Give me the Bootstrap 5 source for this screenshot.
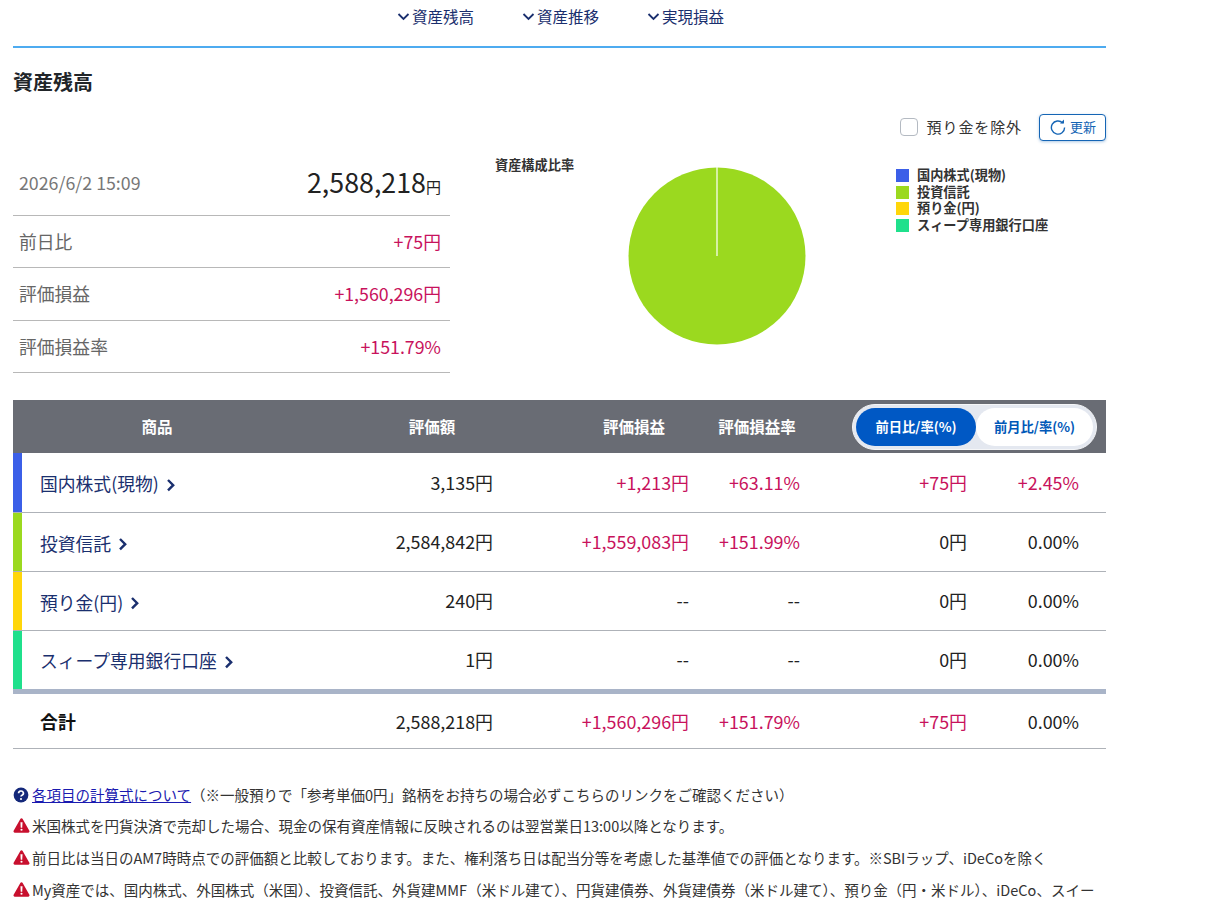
<!DOCTYPE html>
<html lang="ja">
<head>
  <meta charset="UTF-8">
  <meta name="viewport" content="width=device-width, initial-scale=1">
  <title>資産残高</title>
  <link rel="stylesheet" href="https://cdn.jsdelivr.net/npm/bootstrap@5.3.3/dist/css/bootstrap.min.css">
  <style>
    body { font-family: "Noto Sans CJK JP", "Noto Sans", sans-serif; color: #212529; background: #fff; }
    .page-wrap { width: 1093px; margin-left: 13px; }
    .tab-row { height: 48px; border-bottom: 2px solid #4dabf0; padding-left: 384px; gap: 47px; }
    .tab-link { color: #1a2f6e; font-size: 15.5px; text-decoration: none; line-height: 20px; height: 20px; margin-top: 6px; gap: 2px; width: 78px; white-space: nowrap; }
    .page-title { font-size: 20px; font-weight: 700; line-height: 30px; margin: 19px 0 0; }
    .option-row { height: 28px; margin-top: 16px; }
    .fake-check { width: 18px; height: 18px; border: 1px solid #b4bac2; border-radius: 4px; margin-right: 9px; }
    .option-label { font-size: 15px; letter-spacing: .9px; color: #333; margin-right: 17px; }
    .reload-btn { width: 67px; height: 27px; border: 1px solid #1565b5; border-radius: 4px; color: #1565b5; font-size: 13px; gap: 4px; background: #fff; box-shadow: 0 1px 3px rgba(21,101,181,.35); padding: 0 0 0 1px; }
    .sum-table { width: 437px; margin-top: 15px; }
    .sum-line { height: 52.4px; border-bottom: 1px solid #b8b8b8; padding: 0 9px 1px 6px; font-size: 17.8px; color: #666; }
    .sum-line.first-line { height: 60px; padding-bottom: 7px; }
    .when { font-size: 17.8px; color: #777; }
    .big-total { font-size: 26.8px; color: #222; line-height: 1; }
    .big-total small { font-size: 15px; }
    .plus { color: #c8125c; }
    .pie-wrap { margin-left: 46px; }
    .pie-title { font-size: 13.2px; font-weight: 700; color: #333; margin-top: 14px; margin-left: -1px; width: 133px; flex-shrink: 0; }
    .pie-svg { margin-top: 26px; }
    .legend-box { margin-left: 90px; margin-top: 26px; font-size: 13.2px; font-weight: 700; color: #333; line-height: 16.7px; white-space: nowrap; }
    .legend-swatch { width: 13px; height: 13px; margin-right: 8px; }
    .asset-table { width: 1093px; table-layout: fixed; border-collapse: collapse; margin-top: 27px; }
    .asset-table th { background: #696c74; color: #fff; height: 53px; font-size: 15.5px; font-weight: 700; text-align: center; padding: 0; }
    .asset-table td { height: 59px; border-bottom: 1px solid #aeb2b8; font-size: 17.9px; text-align: right; color: #222; padding: 0; }
    .asset-table .c-name { text-align: left; padding-left: 27px; padding-top: 3px; }
    .asset-table .bar-blue { box-shadow: inset 9px 0 0 #3b5fe8; }
    .asset-table .bar-green { box-shadow: inset 9px 0 0 #9bd91f; }
    .asset-table .bar-yellow { box-shadow: inset 9px 0 0 #ffd60a; }
    .asset-table .bar-mint { box-shadow: inset 9px 0 0 #1fe08c; }
    .p-70 { padding-right: 70px !important; }
    .p-16 { padding-right: 16px !important; }
    .p-9 { padding-right: 9px !important; }
    .p-27 { padding-right: 27px !important; }
    .asset-table td.plus { color: #c8125c; }
    .asset-link { color: #1a2f6e; text-decoration: none; font-size: 17.8px; gap: 7px; }
    .asset-table .last-asset td { border-bottom: 5px solid #a9b4c8; height: 61px; padding-bottom: 1px; }
    .asset-table .total-row td { height: 57px; padding-top: 1px; }
    .asset-table .total-row .c-name { font-weight: 700; color: #111; padding-top: 1px; }
    .toggle-pill { width: 245px; height: 46px; background: #e4e8f0; border-radius: 23px; padding: 3px; border: 1px solid #f5f6f8; }
    .toggle-on, .toggle-off { width: 120px; height: 38px; border-radius: 19px; font-size: 13.3px; }
    .toggle-on { background: #0058c4; color: #fff; }
    .toggle-off { background: #fff; color: #0058b8; flex: 1; }
    .note-list { margin-top: 32px; font-size: 14.5px; color: #333; }
    .note-line { height: 32px; line-height: 32px; gap: 2px; white-space: nowrap; }
    .note-line.note-first { height: 29px; gap: 3px; }
    .note-line a { color: #1a1ab0; }
  </style>
</head>
<body>

<div class="page-wrap">
  <nav class="tab-row d-flex">
    <a class="tab-link d-flex align-items-center" href="#"><svg width="13" height="13" viewBox="0 0 13 13"><path d="M1.5 4l5 5 5-5" fill="none" stroke="#1a2f6e" stroke-width="1.8"/></svg>資産残高</a>
    <a class="tab-link d-flex align-items-center" href="#"><svg width="13" height="13" viewBox="0 0 13 13"><path d="M1.5 4l5 5 5-5" fill="none" stroke="#1a2f6e" stroke-width="1.8"/></svg>資産推移</a>
    <a class="tab-link d-flex align-items-center" href="#"><svg width="13" height="13" viewBox="0 0 13 13"><path d="M1.5 4l5 5 5-5" fill="none" stroke="#1a2f6e" stroke-width="1.8"/></svg>実現損益</a>
  </nav>

  <h2 class="page-title">資産残高</h2>

  <div class="option-row d-flex align-items-center justify-content-end">
    <span class="fake-check"></span>
    <span class="option-label">預り金を除外</span>
    <button class="reload-btn d-flex align-items-center justify-content-center" type="button">
      <svg width="16" height="16" viewBox="0 0 16 16"><path d="M12.7 3.9A6.6 6.6 0 1 0 14.6 8.5" fill="none" stroke="#1565b5" stroke-width="1.4"/><path d="M10 4.6h4V.6z" fill="#1565b5"/></svg>更新
    </button>
  </div>

  <div class="d-flex">
    <div class="sum-table flex-shrink-0">
      <div class="sum-line first-line d-flex justify-content-between align-items-center">
        <span class="when">2026/6/2 15:09</span>
        <span class="big-total">2,588,218<small>円</small></span>
      </div>
      <div class="sum-line d-flex justify-content-between align-items-center"><span>前日比</span><span class="plus">+75円</span></div>
      <div class="sum-line d-flex justify-content-between align-items-center"><span>評価損益</span><span class="plus">+1,560,296円</span></div>
      <div class="sum-line d-flex justify-content-between align-items-center"><span>評価損益率</span><span class="plus">+151.79%</span></div>
    </div>
    <div class="pie-wrap d-flex">
      <div class="pie-title">資産構成比率</div>
      <svg class="pie-svg flex-shrink-0" width="178" height="178" viewBox="0 0 178 178">
        <circle cx="89" cy="89" r="88.5" fill="#9bd91f"/>
        <path d="M89 0v89" stroke="#fff" stroke-width="1.2"/>
      </svg>
      <div class="legend-box">
        <div class="d-flex align-items-center"><span class="legend-swatch" style="background:#3b5fe8"></span>国内株式(現物)</div>
        <div class="d-flex align-items-center"><span class="legend-swatch" style="background:#9bd91f"></span>投資信託</div>
        <div class="d-flex align-items-center"><span class="legend-swatch" style="background:#ffd60a"></span>預り金(円)</div>
        <div class="d-flex align-items-center"><span class="legend-swatch" style="background:#1fe08c"></span>スィープ専用銀行口座</div>
      </div>
    </div>
  </div>

  <table class="asset-table">
    <colgroup><col style="width:288px"><col style="width:262px"><col style="width:142px"><col style="width:104px"><col style="width:167px"><col style="width:130px"></colgroup>
    <thead>
      <tr>
        <th>商品</th><th>評価額</th><th>評価損益</th><th>評価損益率</th>
        <th colspan="2" class="p-9">
          <div class="toggle-pill d-flex ms-auto">
            <span class="toggle-on d-flex align-items-center justify-content-center">前日比/率(%)</span>
            <span class="toggle-off d-flex align-items-center justify-content-center">前月比/率(%)</span>
          </div>
        </th>
      </tr>
    </thead>
    <tbody>
      <tr>
        <td class="c-name bar-blue"><a class="asset-link d-inline-flex align-items-center" href="#">国内株式(現物)<svg width="10" height="18" viewBox="0 0 10 18"><path d="M2 5l5.2 5.2L2 15.4" fill="none" stroke="#1a2f6e" stroke-width="2.4"/></svg></a></td>
        <td class="p-70">3,135円</td><td class="plus p-16">+1,213円</td><td class="plus p-9">+63.11%</td><td class="plus p-9">+75円</td><td class="plus p-27">+2.45%</td>
      </tr>
      <tr>
        <td class="c-name bar-green"><a class="asset-link d-inline-flex align-items-center" href="#">投資信託<svg width="10" height="18" viewBox="0 0 10 18"><path d="M2 5l5.2 5.2L2 15.4" fill="none" stroke="#1a2f6e" stroke-width="2.4"/></svg></a></td>
        <td class="p-70">2,584,842円</td><td class="plus p-16">+1,559,083円</td><td class="plus p-9">+151.99%</td><td class="p-9">0円</td><td class="p-27">0.00%</td>
      </tr>
      <tr>
        <td class="c-name bar-yellow"><a class="asset-link d-inline-flex align-items-center" href="#">預り金(円)<svg width="10" height="18" viewBox="0 0 10 18"><path d="M2 5l5.2 5.2L2 15.4" fill="none" stroke="#1a2f6e" stroke-width="2.4"/></svg></a></td>
        <td class="p-70">240円</td><td class="p-16">--</td><td class="p-9">--</td><td class="p-9">0円</td><td class="p-27">0.00%</td>
      </tr>
      <tr class="last-asset">
        <td class="c-name bar-mint"><a class="asset-link d-inline-flex align-items-center" href="#">スィープ専用銀行口座<svg width="10" height="18" viewBox="0 0 10 18"><path d="M2 5l5.2 5.2L2 15.4" fill="none" stroke="#1a2f6e" stroke-width="2.4"/></svg></a></td>
        <td class="p-70">1円</td><td class="p-16">--</td><td class="p-9">--</td><td class="p-9">0円</td><td class="p-27">0.00%</td>
      </tr>
      <tr class="total-row">
        <td class="c-name">合計</td>
        <td class="p-70">2,588,218円</td><td class="plus p-16">+1,560,296円</td><td class="plus p-9">+151.79%</td><td class="plus p-9">+75円</td><td class="p-27">0.00%</td>
      </tr>
    </tbody>
  </table>

  <div class="note-list">
    <div class="note-line note-first d-flex align-items-center">
      <svg width="16" height="16" viewBox="0 0 16 16"><circle cx="8" cy="8" r="7.4" fill="#14287a"/><path d="M5.6 6.2a2.4 2.2 0 1 1 3.4 2c-.7.4-1 .7-1 1.4" fill="none" stroke="#fff" stroke-width="1.7"/><circle cx="8" cy="12" r="1.1" fill="#fff"/></svg>
      <span><a href="#">各項目の計算式について</a>（※一般預りで「参考単価0円」銘柄をお持ちの場合必ずこちらのリンクをご確認ください）</span>
    </div>
    <div class="note-line d-flex align-items-center">
      <svg width="17" height="17" viewBox="0 0 16 16"><path d="M8 1.2a1.3 1.3 0 0 1 1.1.7l6.3 11a1.3 1.3 0 0 1-1.1 1.9H1.7a1.3 1.3 0 0 1-1.1-1.9l6.3-11A1.3 1.3 0 0 1 8 1.2z" fill="#c8102e"/><path d="M7 5h2l-.3 5H7.3z" fill="#fff"/><circle cx="8" cy="12" r="1" fill="#fff"/></svg>
      <span>米国株式を円貨決済で売却した場合、現金の保有資産情報に反映されるのは翌営業日13:00以降となります。</span>
    </div>
    <div class="note-line d-flex align-items-center">
      <svg width="17" height="17" viewBox="0 0 16 16"><path d="M8 1.2a1.3 1.3 0 0 1 1.1.7l6.3 11a1.3 1.3 0 0 1-1.1 1.9H1.7a1.3 1.3 0 0 1-1.1-1.9l6.3-11A1.3 1.3 0 0 1 8 1.2z" fill="#c8102e"/><path d="M7 5h2l-.3 5H7.3z" fill="#fff"/><circle cx="8" cy="12" r="1" fill="#fff"/></svg>
      <span>前日比は当日のAM7時時点での評価額と比較しております。また、権利落ち日は配当分等を考慮した基準値での評価となります。※SBIラップ、iDeCoを除く</span>
    </div>
    <div class="note-line d-flex align-items-center">
      <svg width="17" height="17" viewBox="0 0 16 16"><path d="M8 1.2a1.3 1.3 0 0 1 1.1.7l6.3 11a1.3 1.3 0 0 1-1.1 1.9H1.7a1.3 1.3 0 0 1-1.1-1.9l6.3-11A1.3 1.3 0 0 1 8 1.2z" fill="#c8102e"/><path d="M7 5h2l-.3 5H7.3z" fill="#fff"/><circle cx="8" cy="12" r="1" fill="#fff"/></svg>
      <span>My資産では、国内株式、外国株式（米国）、投資信託、外貨建MMF（米ドル建て）、円貨建債券、外貨建債券（米ドル建て）、預り金（円・米ドル）、iDeCo、スイー</span>
    </div>
  </div>
</div>

</body>
</html>
